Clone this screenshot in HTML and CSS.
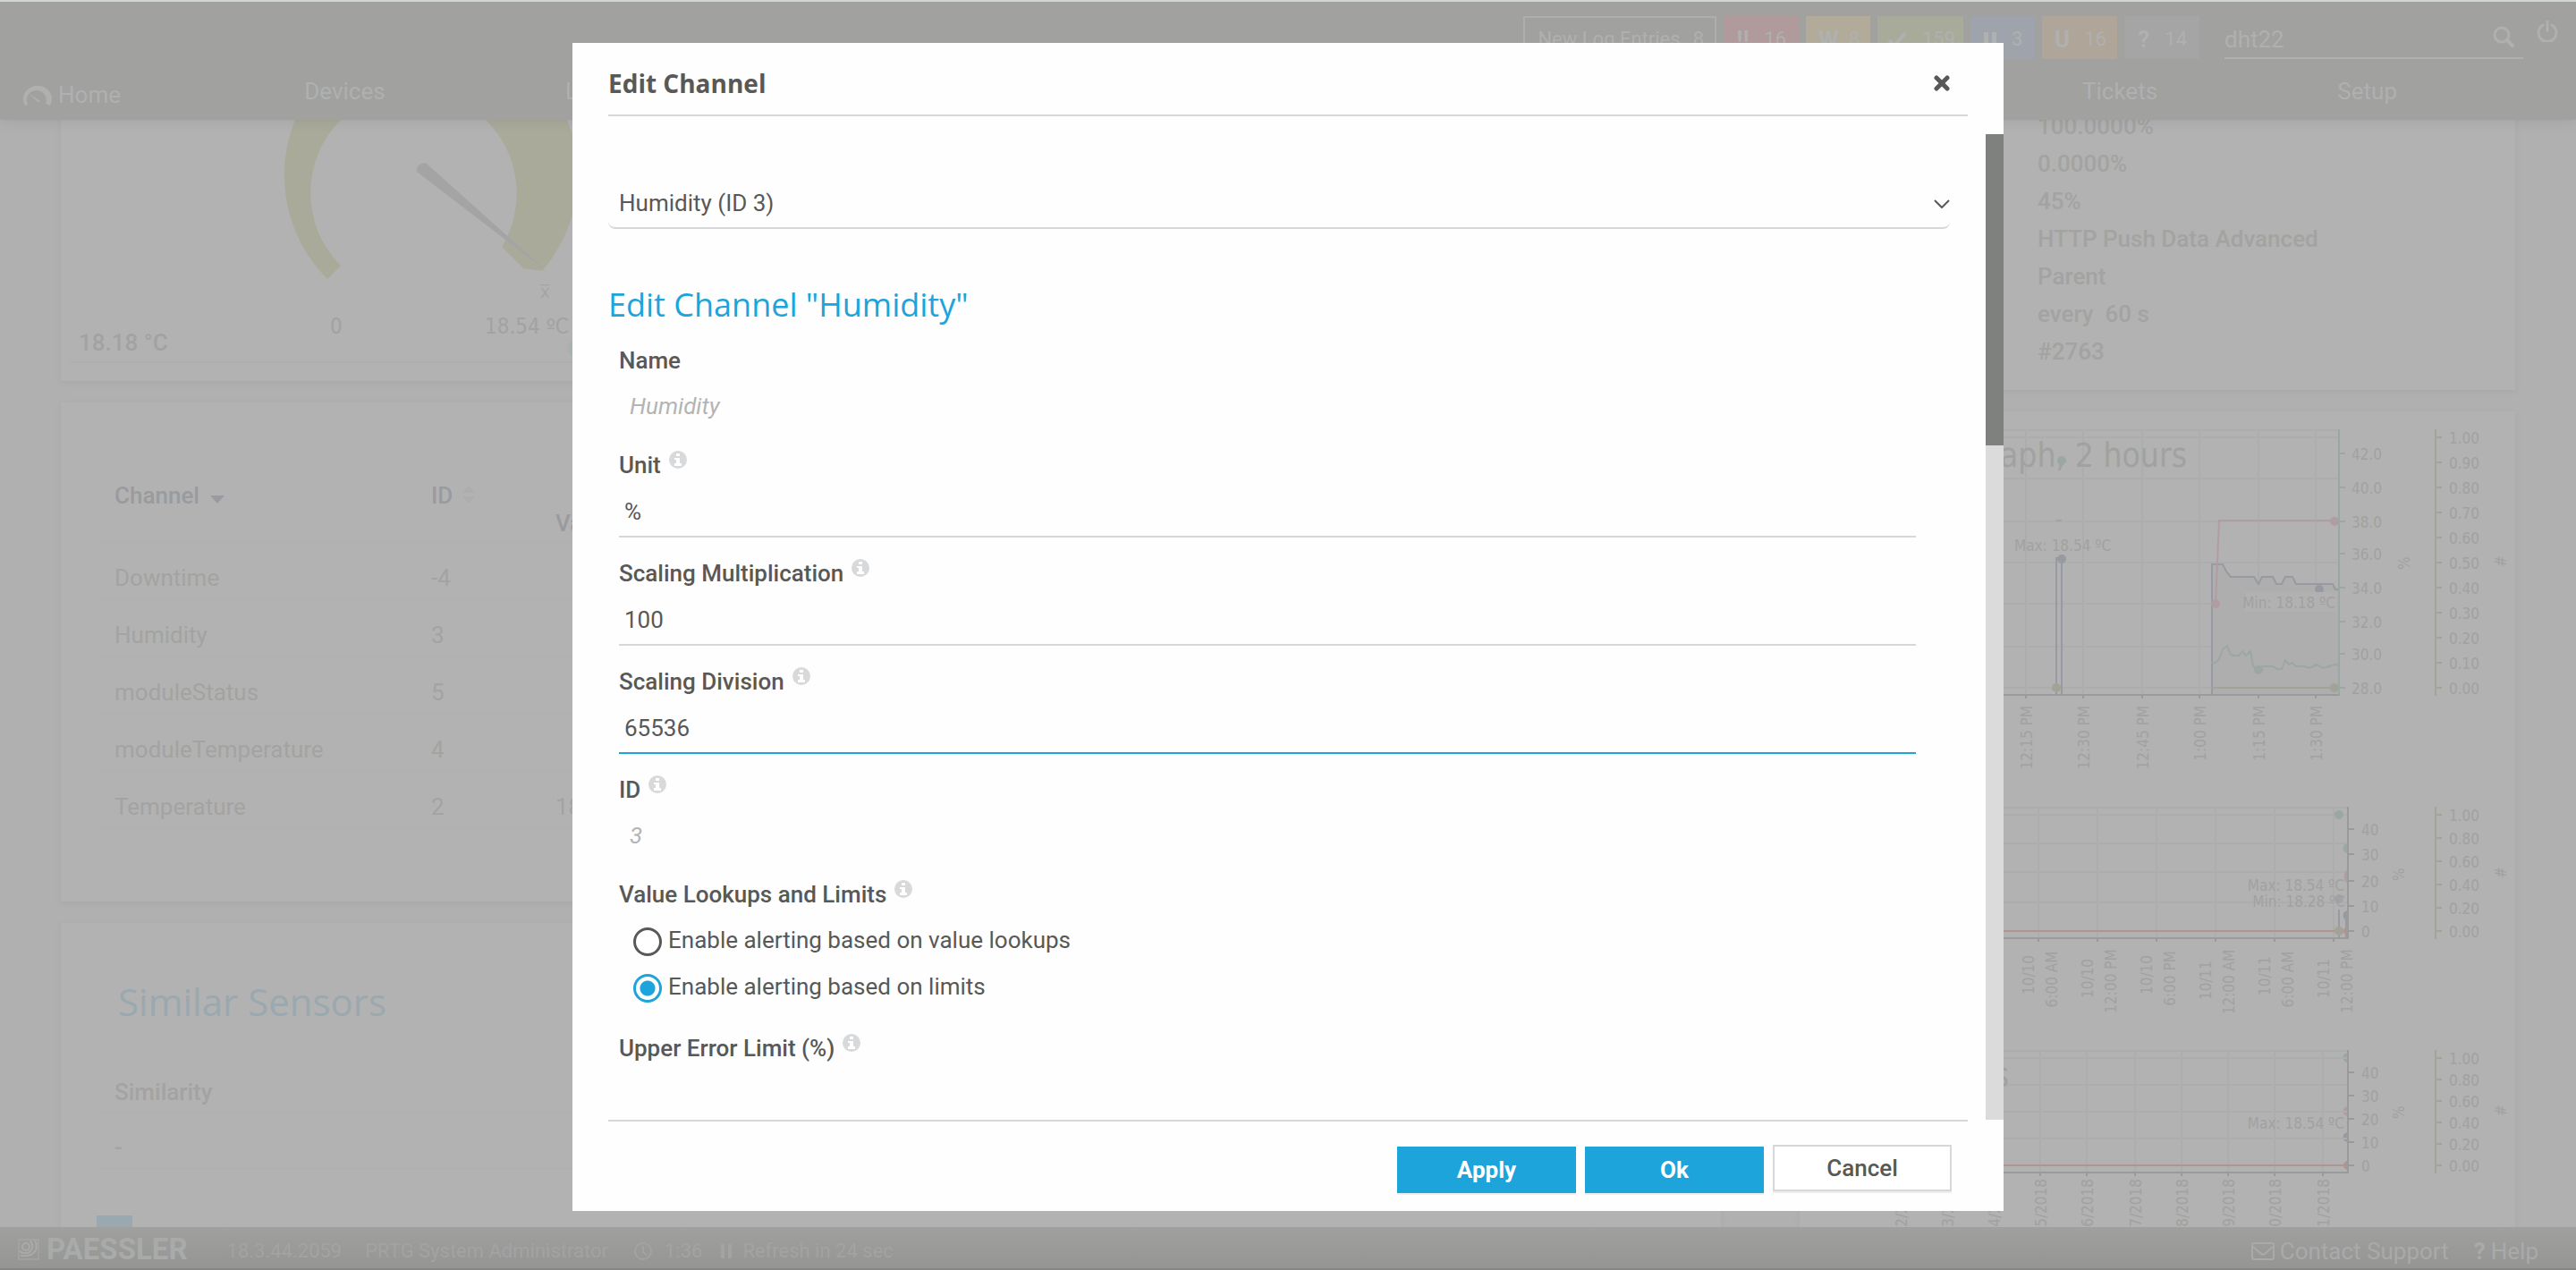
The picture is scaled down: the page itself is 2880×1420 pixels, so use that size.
FILE: index.html
```html
<!DOCTYPE html>
<html lang="en">
<head>
<meta charset="utf-8">
<title>PRTG Network Monitor</title>
<meta name="viewport" content="width=device-width, initial-scale=1">
<link rel="stylesheet" href="styles.css">
</head>
<body>
<header class="topbar">
  <div class="tools">
    <a class="status status-log" href="#"><span>New Log Entries</span><span>8</span></a>
    <a class="status status-down" href="#"><b>!!</b><span>16</span></a>
    <a class="status status-warning" href="#"><b>W</b><span>8</span></a>
    <a class="status status-up" href="#"><svg class="status-icon" viewBox="0 0 24 24"><path d="M3 13l6 6L21 5" fill="none" stroke="currentColor" stroke-width="4"/></svg><span>159</span></a>
    <a class="status status-paused" href="#"><svg class="status-bars" viewBox="0 0 16 24"><path d="M1 4h5v17H1zM10 4h5v17h-5z" fill="currentColor"/></svg><span>3</span></a>
    <a class="status status-unusual" href="#"><b>U</b><span>16</span></a>
    <a class="status status-unknown" href="#"><b>?</b><span>14</span></a>
    <form class="search">
      <input class="search-input" type="text" value="dht22" aria-label="Search">
      <svg class="search-icon" viewBox="0 0 24 24"><circle cx="10" cy="10" r="8" fill="none" stroke="currentColor" stroke-width="3"/><path d="M16 16l6 6" stroke="currentColor" stroke-width="4" stroke-linecap="round"/></svg>
    </form>
    <button class="power" type="button" aria-label="Logout"><svg viewBox="0 0 24 24"><path d="M7 5a10 10 0 1 0 10 0" fill="none" stroke="currentColor" stroke-width="3" stroke-linecap="round"/><path d="M12 1v10" stroke="currentColor" stroke-width="3" stroke-linecap="round"/></svg></button>
  </div>
  <nav class="nav">
    <a class="nav-home" href="#"><svg class="home-icon" viewBox="0 0 32 26"><path d="M2 25A16 15 0 1 1 30 25L25 23A11 11 0 1 0 5 24z" fill="currentColor"/><path d="M7 12l12 8-2 2z" fill="currentColor"/></svg>Home</a>
    <a href="#">Devices</a>
    <a href="#">Libraries</a>
    <a href="#">Sensors</a>
    <a href="#">Alarms</a>
    <a href="#">Maps</a>
    <a href="#">Reports</a>
    <a href="#">Logs</a>
    <a href="#">Tickets</a>
    <a href="#">Setup</a>
  </nav>
</header>

<main class="content">
  <div class="column">
    <section class="card gauge-card">
      <svg class="gauge" viewBox="68 134 600 292">
        <path class="gauge-ring" d="M330 120V134A164 164 0 0 0 366 312L381 297A115 115 0 0 1 381 134V120z"/>
        <path class="gauge-ring" d="M543 120V134A115 115 0 0 1 561 276L585 300L606 303A164 164 0 0 0 634 134V120z"/>
        <path class="gauge-needle" d="M466 192A8 8 0 0 1 477 183L612 304z"/>
        <text class="gauge-text" x="369" y="373">0</text>
        <text class="gauge-text" x="542" y="373">18.54 ºC</text>
        <text class="gauge-mean" x="604" y="333">x̅</text>
        <text class="gauge-value" x="88" y="392">18.18 °C</text>
        <circle class="gauge-dot" cx="642" cy="390" r="8"/>
        <path class="gauge-line" d="M78 405H668"/>
      </svg>
    </section>
    <section class="card table-card">
      <table class="channels">
        <thead>
          <tr><th class="col-channel">Channel <svg class="sort-down" viewBox="0 0 16 9"><path d="M0 0h16L8 9z" fill="currentColor"/></svg></th><th class="col-id">ID <svg class="sort-both" viewBox="0 0 14 20"><path d="M0 8L7 0l7 8zM0 12h14l-7 8z" fill="currentColor"/></svg></th><th class="col-value">Value</th></tr>
        </thead>
        <tbody>
          <tr><td>Downtime</td><td>-4</td><td></td></tr>
          <tr><td>Humidity</td><td>3</td><td></td></tr>
          <tr><td>moduleStatus</td><td>5</td><td></td></tr>
          <tr><td>moduleTemperature</td><td>4</td><td></td></tr>
          <tr><td>Temperature</td><td>2</td><td>18 °C</td></tr>
        </tbody>
      </table>
    </section>
    <section class="card similar-card">
      <h2 class="similar-title">Similar Sensors</h2>
      <table class="similar">
        <thead><tr><th>Similarity</th></tr></thead>
        <tbody><tr><td>-</td></tr></tbody>
      </table>
      <div class="pager"></div>
    </section>
  </div>
  <div class="column">
    <section class="card details-card">
      <ul class="details">
        <li>100.0000%</li>
        <li>0.0000%</li>
        <li>45%</li>
        <li>HTTP Push Data Advanced</li>
        <li>Parent</li>
        <li>every &nbsp;60 s</li>
        <li>#2763</li>
      </ul>
    </section>
    <section class="card graph-card">
      <svg class="graphs" viewBox="2012 460 800 980">
        <!-- live graph -->
        <path class="grid" d="M2040 481H2615M2040 489H2615M2040 535H2615M2040 583H2615M2040 629H2615M2040 675H2615M2040 723H2615M2040 769H2615M2265 481V777M2329 481V777M2395 481V777M2459 481V777M2525 481V777M2589 481V777"/>
        <path class="area" d="M2473 777V631H2485L2494 645H2520L2525 653L2529 645H2541L2545 653H2551L2555 645H2563L2567 653H2608L2611 659H2615V777z"/>
        <text class="graph-title" x="2445" y="522" text-anchor="end">Live Graph, 2 hours</text>
        <path class="navy" d="M2299 777V624H2305V777M2473 777V631H2485L2489 639L2494 645H2520L2525 653L2529 645H2541L2545 653H2551L2555 645H2563L2567 653H2608L2611 659H2615"/>
        <path class="pink" d="M2299 582H2305M2477 675L2481 582H2611"/>
        <path class="teal" d="M2472 741H2477L2481 737L2485 726L2490 722L2494 732L2497 733H2503L2507 728L2511 733L2516 728L2519 745L2525 749L2529 745H2541L2546 748H2551L2555 738L2559 743L2563 741L2567 745H2576L2582 747L2590 743L2597 747L2604 745L2611 743L2615 744"/>
        <path class="olive" d="M2472 769H2611"/>
        <circle class="dot-teal" cx="2305" cy="515" r="5"/><circle class="dot-navy" cx="2305" cy="625" r="5"/><circle class="dot-olive" cx="2299" cy="769" r="5"/><circle class="dot-pink" cx="2477" cy="675" r="5"/><circle class="dot-pink" cx="2610" cy="583" r="5"/><circle class="dot-navy" cx="2593" cy="659" r="5"/><circle class="dot-teal" cx="2525" cy="749" r="5"/><circle class="dot-olive" cx="2610" cy="769" r="5"/>
        <path class="label-box" d="M2510 662H2613V684H2510z"/>
        <text x="2252" y="616">Max: 18.54 ºC</text>
        <text x="2611" y="680" text-anchor="end">Min: 18.18 ºC</text>
        <path class="axis" d="M2040 777H2616M2265 777v4M2329 777v4M2395 777v4M2459 777v4M2525 777v4M2589 777v4"/>
        <path class="teal" d="M2615 480V777M2615 507h7M2615 545h7M2615 583h7M2615 619h7M2615 657h7M2615 695h7M2615 731h7M2615 769h7"/>
        <path class="scale" d="M2723 480V778M2723 489h7M2723 517h7M2723 545h7M2723 573h7M2723 601h7M2723 629h7M2723 657h7M2723 685h7M2723 713h7M2723 741h7M2723 769h7"/>
        <text x="2629" y="514">42.0</text><text x="2629" y="552">40.0</text><text x="2629" y="590">38.0</text><text x="2629" y="626">36.0</text><text x="2629" y="664">34.0</text><text x="2629" y="702">32.0</text><text x="2629" y="738">30.0</text><text x="2629" y="776">28.0</text>
        <text x="2738" y="496">1.00</text><text x="2738" y="524">0.90</text><text x="2738" y="552">0.80</text><text x="2738" y="580">0.70</text><text x="2738" y="608">0.60</text><text x="2738" y="636">0.50</text><text x="2738" y="664">0.40</text><text x="2738" y="692">0.30</text><text x="2738" y="720">0.20</text><text x="2738" y="748">0.10</text><text x="2738" y="776">0.00</text>
        <text transform="translate(2694 637) rotate(-90)">%</text><text transform="translate(2802 634) rotate(-90)">#</text>
        <g text-anchor="end">
          <text transform="translate(2272 789) rotate(-90)">12:15 PM</text><text transform="translate(2336 789) rotate(-90)">12:30 PM</text><text transform="translate(2402 789) rotate(-90)">12:45 PM</text><text transform="translate(2466 789) rotate(-90)">1:00 PM</text><text transform="translate(2532 789) rotate(-90)">1:15 PM</text><text transform="translate(2596 789) rotate(-90)">1:30 PM</text>
        </g>
        <!-- two-day graph -->
        <path class="grid" d="M2040 903H2625M2040 911H2625M2040 943H2625M2040 975H2625M2040 1009H2625M2279 903V1049M2345 903V1049M2411 903V1049M2477 903V1049M2543 903V1049M2609 903V1049"/>
        <path class="navy" d="M2615 1017V1049M2623 1024V1049"/>
        <path class="red" d="M2040 1041H2620"/>
        <circle class="dot-teal" cx="2615" cy="911" r="5"/><path class="dot-teal" d="M2625 943a5 5 0 0 0 0 11zM2625 1177a5 5 0 0 0 0 11z"/><path class="dot-pink" d="M2625 972a8 9 0 0 0 0 16zM2625 1237a5 5 0 0 0 0 11z"/><circle class="dot-navy faint" cx="2615" cy="1005" r="5"/><path class="dot-navy" d="M2625 1018a5 5 0 0 0 0 11zM2625 1266a5 5 0 0 0 0 11z"/><circle class="dot-olive" cx="2615" cy="1041" r="5"/><path class="dot-red" d="M2625 1036a5 5 0 0 0 0 10zM2625 1298a5 5 0 0 0 0 10z"/>
        <g text-anchor="end"><text x="2621" y="996">Max: 18.54 ºC</text><text x="2622" y="1014">Min: 18.28 ºC</text></g>
        <path class="axis" d="M2040 1049H2626M2279 1049v4M2345 1049v4M2411 1049v4M2477 1049v4M2543 1049v4M2609 1049v4M2625 902V1049M2625 927h7M2625 955h7M2625 985h7M2625 1013h7M2625 1041h7"/>
        <path class="scale" d="M2723 902V1050M2723 911h7M2723 937h7M2723 963h7M2723 989h7M2723 1015h7M2723 1041h7"/>
        <text x="2640" y="934">40</text><text x="2640" y="962">30</text><text x="2640" y="992">20</text><text x="2640" y="1020">10</text><text x="2640" y="1048">0</text>
        <text x="2738" y="918">1.00</text><text x="2738" y="944">0.80</text><text x="2738" y="970">0.60</text><text x="2738" y="996">0.40</text><text x="2738" y="1022">0.20</text><text x="2738" y="1048">0.00</text>
        <text transform="translate(2688 985) rotate(-90)">%</text><text transform="translate(2802 982) rotate(-90)">#</text>
        <g text-anchor="middle">
          <text transform="translate(2274 1090) rotate(-90)">10/10</text><text transform="translate(2300 1095) rotate(-90)">6:00 AM</text>
          <text transform="translate(2340 1094) rotate(-90)">10/10</text><text transform="translate(2366 1097) rotate(-90)">12:00 PM</text>
          <text transform="translate(2406 1090) rotate(-90)">10/10</text><text transform="translate(2432 1094) rotate(-90)">6:00 PM</text>
          <text transform="translate(2472 1096) rotate(-90)">10/11</text><text transform="translate(2498 1098) rotate(-90)">12:00 AM</text>
          <text transform="translate(2538 1091) rotate(-90)">10/11</text><text transform="translate(2564 1095) rotate(-90)">6:00 AM</text>
          <text transform="translate(2604 1094) rotate(-90)">10/11</text><text transform="translate(2630 1097) rotate(-90)">12:00 PM</text>
        </g>
        <!-- thirty-day graph -->
        <path class="grid" d="M2040 1175H2625M2040 1183H2625M2040 1213H2625M2040 1243H2625M2040 1273H2625M2281 1175V1310M2333 1175V1310M2387 1175V1310M2439 1175V1310M2491 1175V1310M2543 1175V1310M2597 1175V1310"/>
        <text class="graph-title" x="2246" y="1215" text-anchor="end">Graph, 30 days</text>
        <path class="red" d="M2040 1303H2620"/>
        <text x="2621" y="1262" text-anchor="end">Max: 18.54 ºC</text>
        <path class="axis" d="M2040 1311H2626M2281 1311v4M2333 1311v4M2387 1311v4M2439 1311v4M2491 1311v4M2543 1311v4M2597 1311v4M2625 1174V1311M2625 1199h7M2625 1225h7M2625 1251h7M2625 1277h7M2625 1303h7"/>
        <path class="scale" d="M2723 1174V1312M2723 1183h7M2723 1207h7M2723 1231h7M2723 1255h7M2723 1279h7M2723 1303h7"/>
        <text x="2640" y="1206">40</text><text x="2640" y="1232">30</text><text x="2640" y="1258">20</text><text x="2640" y="1284">10</text><text x="2640" y="1310">0</text>
        <text x="2738" y="1190">1.00</text><text x="2738" y="1214">0.80</text><text x="2738" y="1238">0.60</text><text x="2738" y="1262">0.40</text><text x="2738" y="1286">0.20</text><text x="2738" y="1310">0.00</text>
        <text transform="translate(2688 1251) rotate(-90)">%</text><text transform="translate(2802 1248) rotate(-90)">#</text>
        <g text-anchor="end">
          <text transform="translate(2132 1318) rotate(-90)">10/2/2018</text><text transform="translate(2184 1318) rotate(-90)">10/3/2018</text><text transform="translate(2236 1318) rotate(-90)">10/4/2018</text><text transform="translate(2288 1318) rotate(-90)">10/5/2018</text><text transform="translate(2340 1318) rotate(-90)">10/6/2018</text><text transform="translate(2394 1318) rotate(-90)">10/7/2018</text><text transform="translate(2446 1318) rotate(-90)">10/8/2018</text><text transform="translate(2498 1318) rotate(-90)">10/9/2018</text><text transform="translate(2550 1318) rotate(-90)">10/10/2018</text><text transform="translate(2604 1318) rotate(-90)">10/11/2018</text>
        </g>
      </svg>
    </section>
  </div>
</main>

<footer class="statusbar">
  <a class="brand" href="#"><svg class="brand-icon" viewBox="0 0 24 24"><rect x="1" y="1" width="22" height="22" fill="none" stroke="currentColor" stroke-width="1"/><circle cx="9" cy="9" r="4" fill="none" stroke="currentColor" stroke-width="2"/><path d="M2 14c3 3 9 3 12 0s3-8 0-12M3 19c8 1 14-1 17-6 1-4 1-8-1-11" fill="none" stroke="currentColor" stroke-width="2"/></svg>PAESSLER</a>
  <span class="version">18.3.44.2059</span>
  <a class="user" href="#">PRTG System Administrator</a>
  <span class="clock"><svg class="clock-icon" viewBox="0 0 22 22"><circle cx="11" cy="11" r="9" fill="none" stroke="currentColor" stroke-width="2"/><path d="M11 5v7l4 3" fill="none" stroke="currentColor" stroke-width="2"/></svg>1:36</span>
  <a class="refresh" href="#"><svg class="pause-icon" viewBox="0 0 12 16"><path d="M0 0h4v16H0zM8 0h4v16H8z" fill="currentColor"/></svg>Refresh in 24 sec</a>
  <a class="support" href="#"><svg class="mail-icon" viewBox="0 0 26 20"><rect x="1" y="1" width="24" height="18" rx="2" fill="none" stroke="currentColor" stroke-width="2"/><path d="M2 5l9 8q2 1 4 0l9-8" fill="none" stroke="currentColor" stroke-width="2"/></svg>Contact Support</a>
  <a class="help" href="#"><b>?</b>Help</a>
</footer>

<div class="dialog" role="dialog" aria-labelledby="dialog-title">
  <div class="dialog-head">
    <h1 class="dialog-title" id="dialog-title">Edit Channel</h1>
    <button class="close" type="button" aria-label="Close"><svg viewBox="0 0 18 18"><path d="M3 3l12 12M15 3L3 15" stroke="currentColor" stroke-width="5" stroke-linecap="round"/></svg></button>
  </div>
  <div class="dialog-body">
    <form class="form">
      <div class="picker">
        <select class="picker-select" aria-label="Channel"><option>Humidity (ID 3)</option></select>
        <svg class="picker-arrow" viewBox="0 0 18 10"><path d="M1 1l8 8 8-8" fill="none" stroke="currentColor" stroke-width="2"/></svg>
      </div>
      <h2 class="form-title">Edit Channel "Humidity"</h2>
      <div class="field">
        <label class="label" for="name">Name</label>
        <input class="static" id="name" type="text" value="Humidity" readonly>
      </div>
      <div class="field">
        <label class="label" for="unit">Unit<svg class="info" viewBox="0 0 20 20"><circle cx="10" cy="10" r="10" fill="#d7d9da"/><path d="M8 3h4v3H8zM6 8h6v6h2v3H6v-3h2v-4H6z" fill="#fff"/></svg></label>
        <input class="input" id="unit" type="text" value="%">
      </div>
      <div class="field">
        <label class="label" for="mult">Scaling Multiplication<svg class="info" viewBox="0 0 20 20"><circle cx="10" cy="10" r="10" fill="#d7d9da"/><path d="M8 3h4v3H8zM6 8h6v6h2v3H6v-3h2v-4H6z" fill="#fff"/></svg></label>
        <input class="input" id="mult" type="text" value="100">
      </div>
      <div class="field">
        <label class="label" for="div">Scaling Division<svg class="info" viewBox="0 0 20 20"><circle cx="10" cy="10" r="10" fill="#d7d9da"/><path d="M8 3h4v3H8zM6 8h6v6h2v3H6v-3h2v-4H6z" fill="#fff"/></svg></label>
        <input class="input input-active" id="div" type="text" value="65536">
      </div>
      <div class="field">
        <label class="label" for="cid">ID<svg class="info" viewBox="0 0 20 20"><circle cx="10" cy="10" r="10" fill="#d7d9da"/><path d="M8 3h4v3H8zM6 8h6v6h2v3H6v-3h2v-4H6z" fill="#fff"/></svg></label>
        <input class="static" id="cid" type="text" value="3" readonly>
      </div>
      <fieldset class="field">
        <legend class="label">Value Lookups and Limits<svg class="info" viewBox="0 0 20 20"><circle cx="10" cy="10" r="10" fill="#d7d9da"/><path d="M8 3h4v3H8zM6 8h6v6h2v3H6v-3h2v-4H6z" fill="#fff"/></svg></legend>
        <div class="choices">
          <label class="choice"><input class="radio" type="radio" name="limits">Enable alerting based on value lookups</label>
          <label class="choice"><input class="radio" type="radio" name="limits" checked>Enable alerting based on limits</label>
        </div>
      </fieldset>
      <div class="field">
        <span class="label">Upper Error Limit (%)<svg class="info" viewBox="0 0 20 20"><circle cx="10" cy="10" r="10" fill="#d7d9da"/><path d="M8 3h4v3H8zM6 8h6v6h2v3H6v-3h2v-4H6z" fill="#fff"/></svg></span>
      </div>
    </form>
    <div class="scrollbar"><div class="scrollbar-thumb"></div></div>
  </div>
  <div class="dialog-foot">
    <button class="button button-primary" type="button">Apply</button>
    <button class="button button-primary" type="button">Ok</button>
    <button class="button button-plain" type="button">Cancel</button>
  </div>
</div>
</body>
</html>
```

FILE: styles.css
```css
* {
  box-sizing: border-box;
}

body {
  display: flex;
  flex-direction: column;
  height: 100vh;
  margin: 0;
  overflow: hidden;
  background: #b0b0b0;
  color: #a3a3a1;
  font: 26px/32px Roboto, "Liberation Sans", sans-serif;
}

a {
  color: inherit;
  text-decoration: none;
}

button,
input,
select {
  color: inherit;
  font: inherit;
}

svg {
  display: block;
  flex: none;
}

/* top bar */
.topbar {
  position: relative;
  z-index: 1;
  flex: none;
  height: 134px;
  border-top: 2px solid #d0d6d4;
  background: #a1a19f;
  box-shadow: 0 2px 12px rgba(90, 90, 90, 0.15);
  color: #afb0b0;
}

.tools {
  display: flex;
  justify-content: flex-end;
  gap: 8px;
  padding: 16px 20px 0 0;
}

.status {
  display: flex;
  align-items: center;
  gap: 16px;
  height: 48px;
  padding: 4px 14px 0;
  font-size: 22px;
}

.status b {
  width: 18px;
  font-size: 26px;
  line-height: 24px;
  text-align: center;
}

.status-log {
  gap: 14px;
  padding: 4px 12px 0 14px;
  border: 2px solid #adaead;
}

.status-icon {
  width: 24px;
  height: 24px;
}

.status-bars {
  width: 16px;
  height: 24px;
}

.status-down {
  width: 84px;
  background: #b09a9b;
}

.status-warning {
  width: 72px;
  background: #b2ab9a;
}

.status-up {
  width: 96px;
  padding: 4px 10px 0;
  background: #a9ab9a;
}

.status-paused {
  width: 72px;
  background: #9fa4ac;
}

.status-unusual {
  width: 84px;
  background: #afa699;
}

.status-unknown {
  width: 84px;
  background: #a5a5a5;
}

.search {
  display: flex;
  align-items: center;
  width: 334px;
  margin: 0 0 0 20px;
  border-bottom: 2px solid #b0b1b0;
}

.search-input {
  flex: 1;
  min-width: 0;
  padding: 6px 0 0;
  border: 0;
  background: none;
}

.search-icon {
  width: 24px;
  height: 24px;
  margin-right: 10px;
}

.power {
  width: 24px;
  height: 24px;
  margin: 5px 0 0 7px;
  padding: 0;
  border: 0;
  background: none;
}

.nav {
  display: flex;
  align-items: flex-start;
  justify-content: space-between;
  padding: 20px 200px 0 26px;
}

.nav-home {
  display: flex;
  align-items: center;
  gap: 7px;
  padding: 4px 4px 0 0;
}

.home-icon {
  width: 32px;
  height: 26px;
}

/* page behind the dialog */
.content {
  display: grid;
  flex: 1;
  grid-template-columns: 1fr 800px;
  gap: 88px;
  min-height: 0;
  padding: 0 68px;
  overflow: hidden;
}

.column {
  display: flex;
  flex-direction: column;
  gap: 24px;
  min-width: 0;
}

.card {
  flex: none;
  background: #b2b2b2;
  box-shadow: 0 2px 6px rgba(100, 100, 100, 0.1);
}

.gauge {
  width: 600px;
  height: 292px;
}

.gauge-ring {
  fill: #a9aa9a;
}

.gauge-needle {
  fill: #a4a4a4;
}

.gauge-dot {
  fill: #a8b0b0;
}

.gauge-line {
  stroke: #aeaeae;
  stroke-width: 2;
}

.gauge-text {
  fill: #a2a2a1;
  font: 24px "DejaVu Sans Condensed", "DejaVu Sans", sans-serif;
}

.gauge-mean {
  fill: #a4a4a4;
  font: 20px "DejaVu Sans Condensed", "DejaVu Sans", sans-serif;
}

.gauge-value {
  fill: #a2a2a0;
  font-weight: 500;
}

.table-card {
  height: 558px;
  padding: 52px 40px;
}

.channels {
  width: 100%;
  border-collapse: collapse;
  table-layout: fixed;
}

.channels th {
  height: 104px;
  padding: 20px 20px 36px;
  border-bottom: 1px solid #afafaf;
  color: #999b9f;
  font-weight: 500;
  text-align: left;
  vertical-align: bottom;
}

.channels .col-channel {
  width: 354px;
}

.channels .col-id {
  width: 139px;
}

.channels .col-value {
  padding-bottom: 5px;
}

.channels td {
  height: 64px;
  padding: 16px 20px 0;
  border-bottom: 1px solid #afafaf;
}

.sort-down {
  display: inline-block;
  width: 16px;
  height: 9px;
  margin-left: 6px;
}

.sort-both {
  display: inline-block;
  width: 14px;
  height: 20px;
  margin-left: 4px;
  color: #abaeac;
}

.similar-card {
  height: 400px;
  padding: 60px 40px;
}

.similar-title {
  margin: 0 0 34px 24px;
  color: #9aa8af;
  font: 42px/56px "Open Sans", "Noto Sans", sans-serif;
}

.similar {
  width: 100%;
  border-collapse: collapse;
}

.similar th,
.similar td {
  height: 62px;
  padding: 16px 20px 0;
  border-bottom: 1px solid #afafaf;
  font-weight: 500;
  text-align: left;
}

.pager {
  width: 40px;
  height: 40px;
  margin-top: 52px;
  background: #9aa8af;
}

.details-card {
  height: 302px;
  padding-left: 266px;
}

.details {
  margin: 0;
  padding: 0;
  font-weight: 500;
  line-height: 42px;
  list-style: none;
}

.details li:first-child {
  margin-top: -14px;
}

.graphs {
  width: 800px;
  height: 980px;
  fill: #a1a1a0;
  font: 17px "DejaVu Sans Condensed", "DejaVu Sans", sans-serif;
}

.graph-title {
  font-size: 37px;
}

.grid,
.axis,
.scale,
.navy,
.pink,
.teal,
.olive,
.red {
  fill: none;
  stroke-width: 2;
}

.grid {
  stroke: #acaeae;
}

.axis {
  stroke: #9a9a9a;
}

.scale {
  stroke: #a3a39c;
}

.navy {
  stroke: #979aa1;
}

.pink {
  stroke: #b09da3;
}

.teal {
  stroke: #9ba7a4;
}

.olive {
  stroke: #a3a296;
}

.red {
  stroke: #b09494;
}

.area {
  fill: #aeaeae;
}

.label-box {
  fill: #b1b1b1;
}

.dot-teal {
  fill: #9ba7a4;
}

.dot-navy {
  fill: #979aa1;
}

.faint {
  opacity: 0.6;
}

.dot-pink {
  fill: #b09da3;
}

.dot-olive {
  fill: #a3a296;
}

.dot-red {
  fill: #b09494;
}

/* bottom bar */
.statusbar {
  position: relative;
  display: flex;
  flex: none;
  align-items: center;
  height: 48px;
  padding: 8px 42px 0 20px;
  border-bottom: 2px solid #868684;
  background: linear-gradient(#a0a09e, #959593);
  color: #a3a3a4;
  font-size: 22px;
}

.brand,
.clock,
.refresh,
.support,
.help {
  display: flex;
  align-items: center;
}

.brand {
  gap: 8px;
  margin: -4px 44px 0 0;
  color: #a9aaaa;
  font-size: 33px;
  font-weight: 700;
}

.brand-icon {
  width: 24px;
  height: 24px;
}

.version {
  margin-right: 26px;
}

.user {
  margin-right: 28px;
}

.clock {
  gap: 13px;
  margin-right: 21px;
}

.clock-icon {
  width: 22px;
  height: 22px;
}

.refresh {
  gap: 12px;
}

.pause-icon {
  width: 12px;
  height: 16px;
}

.support {
  gap: 6px;
  margin-left: auto;
  color: #a9aaaa;
  font-size: 26px;
}

.mail-icon {
  width: 26px;
  height: 20px;
}

.help {
  gap: 6px;
  margin-left: 28px;
  color: #a9aaaa;
  font-size: 26px;
}

/* dialog */
.dialog {
  position: fixed;
  z-index: 2;
  top: 48px;
  right: 0;
  bottom: 66px;
  left: 0;
  display: flex;
  flex-direction: column;
  width: 1600px;
  max-width: 100%;
  margin: 0 auto;
  background: #fefefe;
  color: #585857;
}

.dialog-head {
  display: flex;
  flex: none;
  align-items: center;
  justify-content: space-between;
  height: 82px;
  margin: 0 40px 20px;
  padding: 10px 20px 0 0;
  border-bottom: 2px solid #d7d7d7;
}

.dialog-title {
  margin: 0;
  font: 700 28px/40px "Open Sans", "Noto Sans", sans-serif;
}

.close {
  width: 18px;
  height: 18px;
  padding: 0;
  border: 0;
  background: none;
}

.dialog-body {
  display: grid;
  flex: 1;
  grid-template-columns: 1fr 20px;
  min-height: 0;
}

.form {
  display: flex;
  flex-direction: column;
  gap: 24px;
  min-width: 0;
  padding: 50px 40px 0;
  overflow: hidden;
}

.picker {
  display: grid;
  align-items: center;
}

.picker-select {
  grid-area: 1 / 1;
  width: 100%;
  height: 56px;
  padding: 0 12px;
  border: 0;
  border-bottom: 2px solid #d7d7d7;
  border-radius: 8px;
  appearance: none;
  background: none;
}

.picker-arrow {
  grid-area: 1 / 1;
  justify-self: end;
  width: 18px;
  height: 10px;
  pointer-events: none;
}

.form-title {
  margin: 37px 0 -2px;
  color: #1ca4db;
  font: 36px/48px "Open Sans", "Noto Sans", sans-serif;
}

.field {
  display: flex;
  flex-direction: column;
  gap: 9px;
  min-width: 0;
  margin: 0 38px 0 12px;
  padding: 0;
  border: 0;
}

.label {
  display: flex;
  align-items: flex-start;
  gap: 9px;
  padding: 0;
  font-weight: 500;
}

.info {
  width: 20px;
  height: 20px;
}

.input {
  height: 56px;
  padding: 0 6px;
  border: 0;
  border-bottom: 2px solid #d7d7d7;
  background: none;
}

.input-active {
  border-color: #1ca4db;
  outline: none;
}

.static {
  height: 52px;
  padding: 0 12px;
  border: 0;
  background: none;
  color: #b4b4b4;
  font-style: italic;
}

.choices {
  display: flex;
  flex-direction: column;
  margin-top: 9px;
  padding-bottom: 3px;
}

.choice {
  display: flex;
  align-items: center;
  gap: 7px;
  height: 52px;
  padding-left: 16px;
}

.radio {
  width: 32px;
  height: 32px;
  margin: 4px 0 0;
  border: 3px solid #585857;
  border-radius: 50%;
  appearance: none;
  background: #fff;
}

.radio:checked {
  border-color: #1ca4db;
  background: radial-gradient(circle, #1ca4db 8px, #fff 9px);
}

.scrollbar {
  background: #dbdbdb;
}

.scrollbar-thumb {
  height: 348px;
  background: #7f817f;
}

.dialog-foot {
  display: flex;
  flex: none;
  align-items: flex-start;
  justify-content: flex-end;
  gap: 10px;
  height: 102px;
  margin: 0 40px;
  padding: 26px 18px 0 0;
  border-top: 2px solid #d7d7d7;
}

.button {
  width: 200px;
  height: 52px;
  padding: 0;
  border: 0;
  box-shadow: 0 2px 0 #eee;
  font-weight: 500;
}

.button-primary {
  margin-top: 2px;
  background: #1ca4db;
  color: #fff;
  font-weight: 700;
}

.button-plain {
  border: 2px solid #d7d7d7;
  background: #fff;
}
```
